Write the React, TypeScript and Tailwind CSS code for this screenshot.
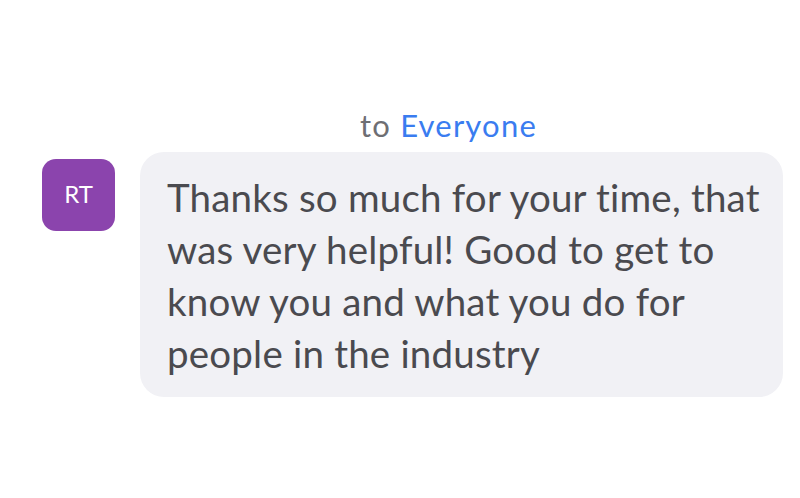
import React from "react";

export default function App() {
  return (
    <div
      className="w-[800px] h-[498px] bg-white overflow-hidden [font-variant-ligatures:none]"
      style={{ fontFamily: 'Lato, "Open Sans", sans-serif' }}
    >
      <div className="pt-[105px] pl-[360px] h-[152px]">
        <div className="text-[31px] leading-[40px] tracking-[1.2px] text-[#6e6e73]">
          to <span className="text-[#3a7cf0]">Everyone</span>
        </div>
      </div>
      <div className="flex items-start pl-[42px]">
        <div className="mt-[7px] w-[73px] h-[72px] rounded-[14px] bg-[#8b44ad] flex items-center justify-center text-white text-[24px] pb-[2px]">
          RT
        </div>
        <div className="ml-[25px] w-[643px] h-[245px] rounded-[24px] bg-[#f1f1f5] pl-[27px] pt-[19px]">
          <p className="text-[38.5px] leading-[52px] tracking-[0.2px] text-[#4a4a4f]">
            Thanks so much for your time, that
            <br />
            was very helpful! Good to get to
            <br />
            know you and what you do for
            <br />
            people in the industry
          </p>
        </div>
      </div>
    </div>
  );
}
